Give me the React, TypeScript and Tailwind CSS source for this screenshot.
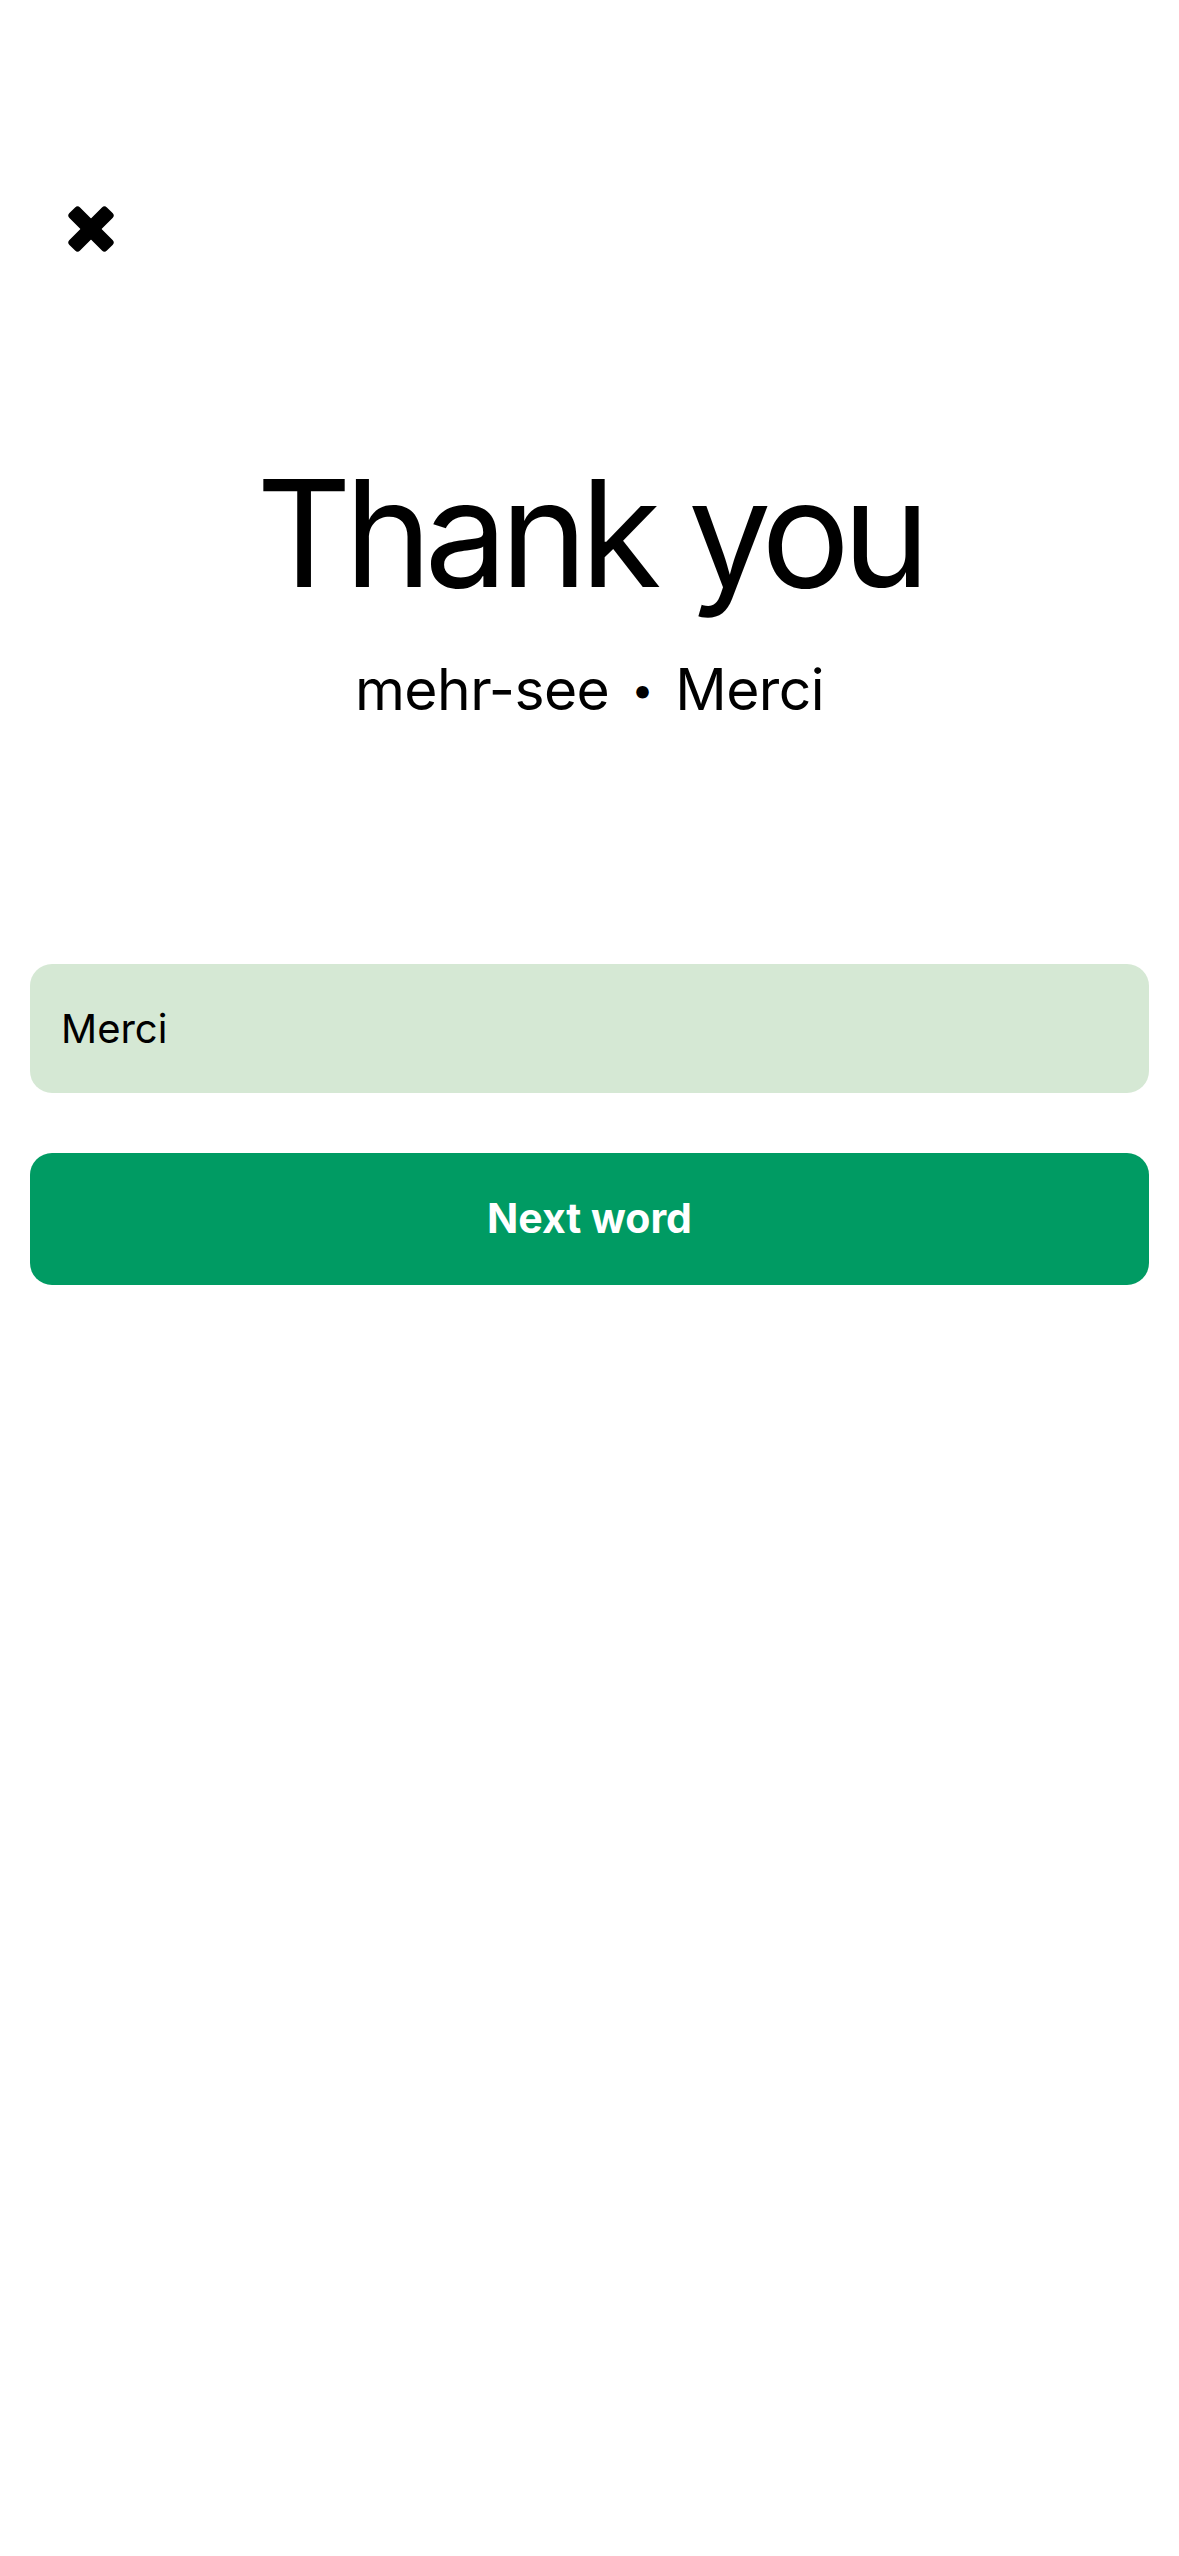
import React from "react";

function CloseIcon() {
  return (
    <svg width="48" height="48" viewBox="0 0 48 48" fill="currentColor">
      <rect x="-2.5" y="16.5" width="53" height="15" rx="3.5" transform="rotate(45 24 24)" />
      <rect x="-2.5" y="16.5" width="53" height="15" rx="3.5" transform="rotate(-45 24 24)" />
    </svg>
  );
}

export default function App() {
  return (
    <div
      className="min-h-[2556px] w-full bg-white text-black"
      style={{ fontFamily: "Inter, 'Noto Sans', sans-serif" }}
    >
      <div className="pt-[205px] pl-[67px]">
        <button type="button" className="block text-black">
          <CloseIcon />
        </button>
      </div>

      <div className="mt-[207px] flex flex-col items-center">
        <h1 className="text-[148px] leading-none font-normal tracking-[-0.05em]">Thank you</h1>
        <div className="mt-[53px] flex items-center gap-[22px] text-[57px] leading-none tracking-[-0.01em]">
          <span>mehr-see</span>
          <span className="text-[40px]">•</span>
          <span>Merci</span>
        </div>
      </div>

      <div className="mx-[30px] mt-[246px]">
        <div className="flex h-[129px] items-center rounded-[22px] bg-[#d5e8d4] pl-[31px] text-[40px]">
          Merci
        </div>
        <button
          type="button"
          className="mt-[60px] flex h-[132px] w-full items-center justify-center rounded-[22px] bg-[#009b63] text-[41px] font-bold text-white"
        >
          Next word
        </button>
      </div>
    </div>
  );
}
